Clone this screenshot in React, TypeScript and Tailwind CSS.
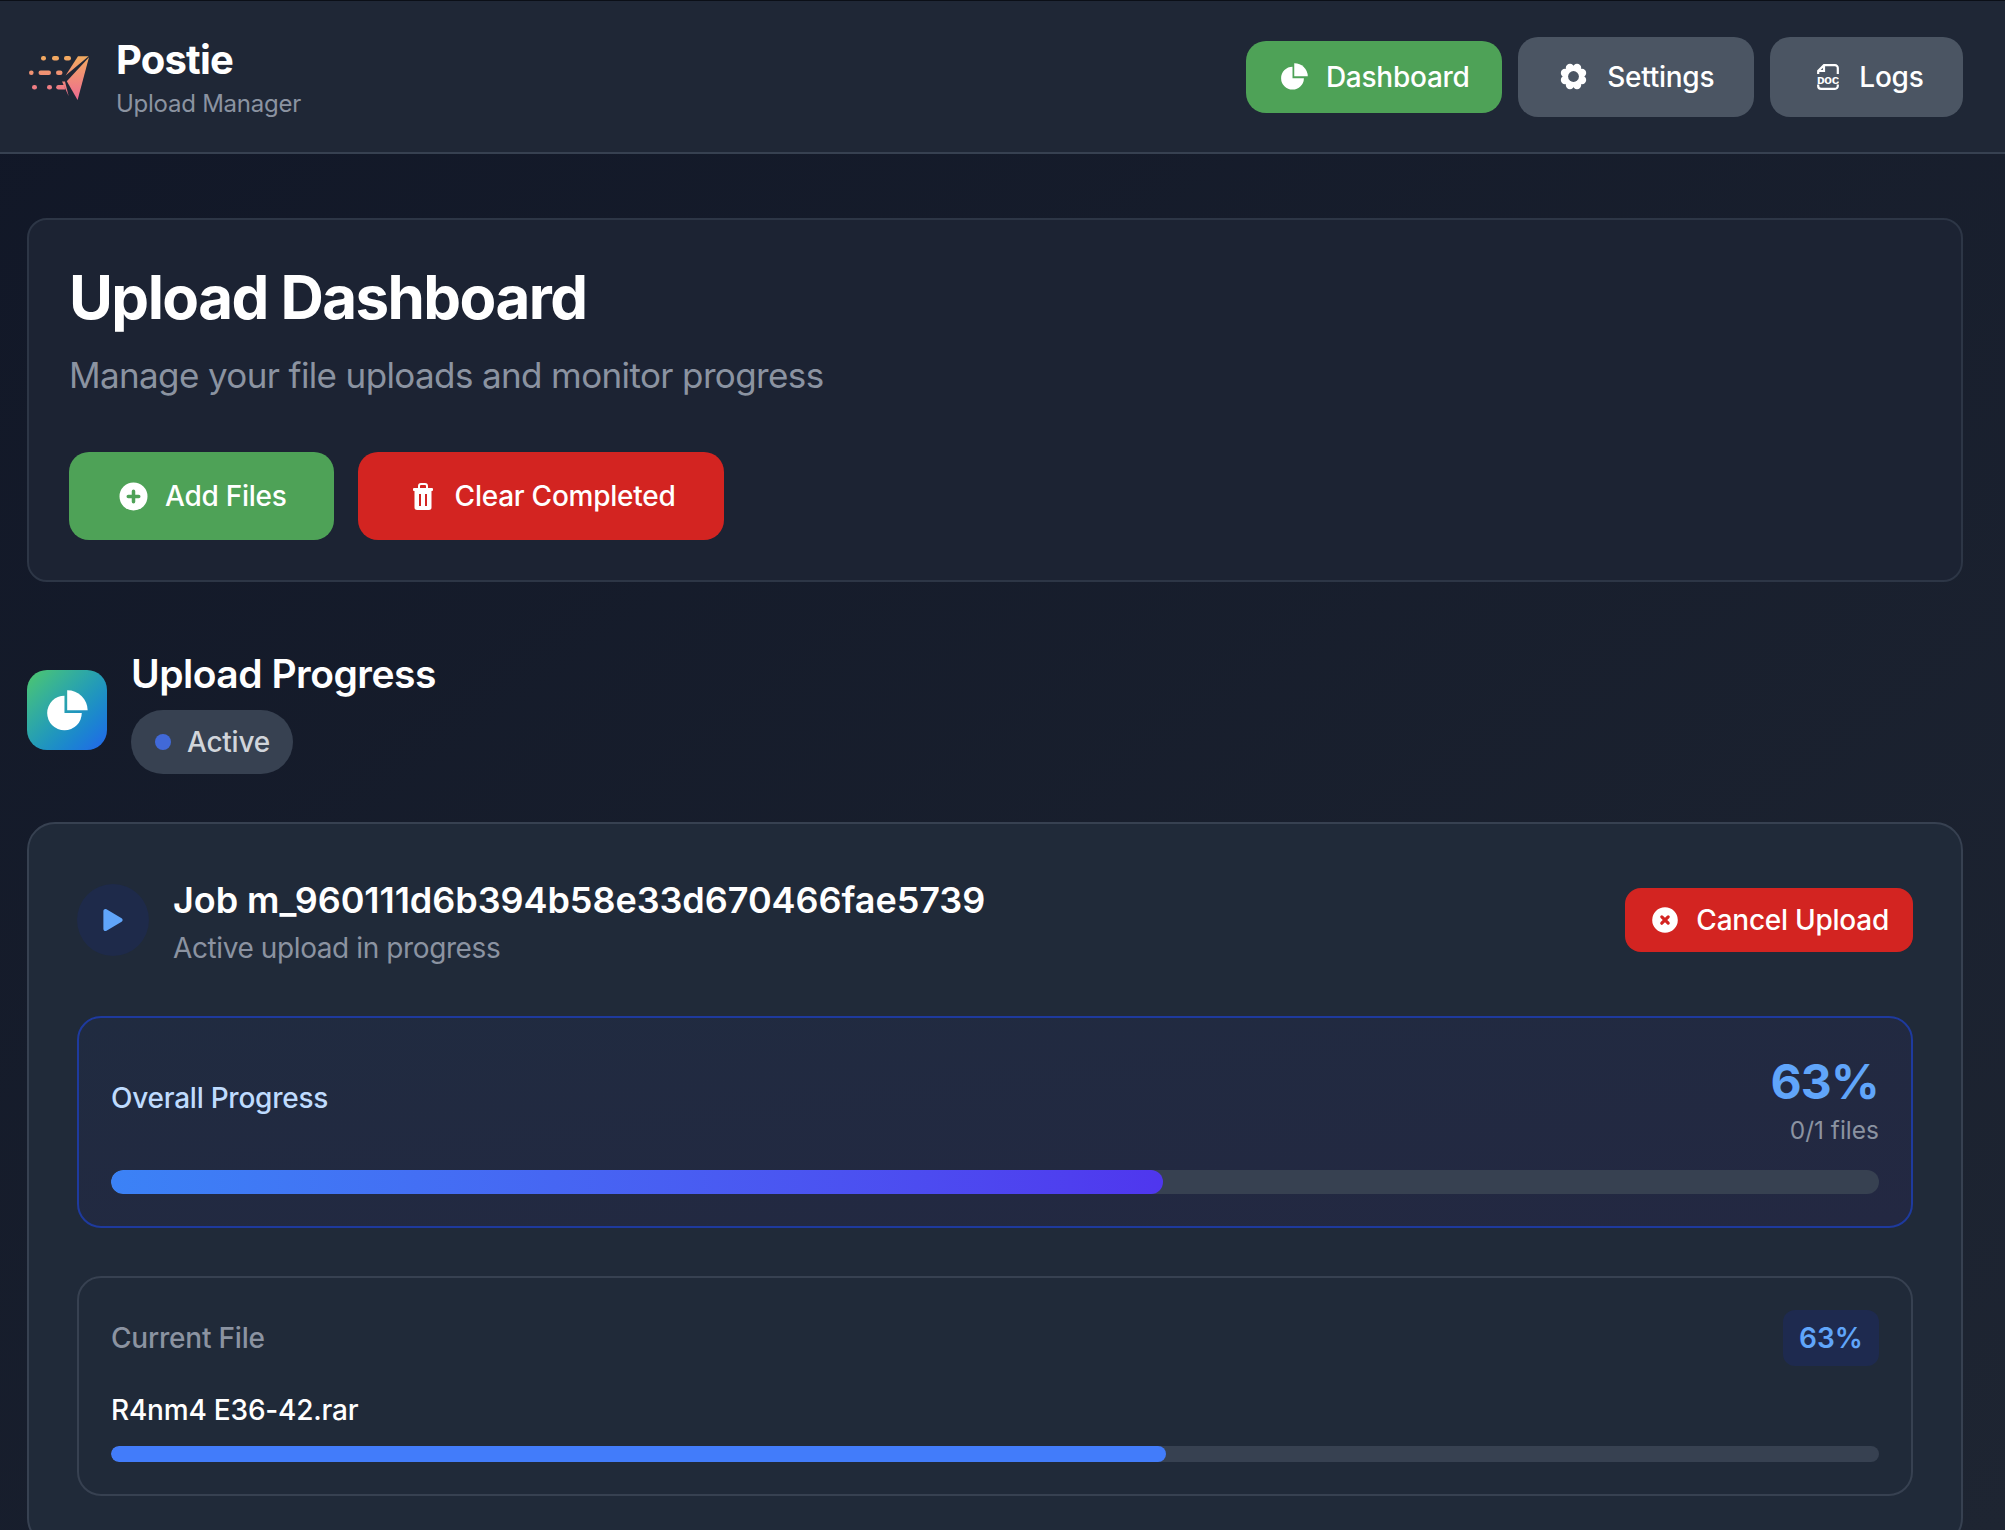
import { HiPlusCircle, HiXCircle } from 'react-icons/hi';
import { FaPlay } from 'react-icons/fa';

function Logo() {
  return (
    <svg width="62" height="52" viewBox="28 50 62 52" className="shrink-0">
      <defs>
        <linearGradient id="logoGrad" gradientUnits="userSpaceOnUse" x1="0" y1="55" x2="0" y2="99">
          <stop offset="0" stopColor="#f2ab5f" />
          <stop offset="1" stopColor="#ee6a92" />
        </linearGradient>
      </defs>
      <g fill="url(#logoGrad)">
        <rect x="41" y="55" width="5" height="4.4" rx="2.2" />
        <rect x="52" y="55" width="7" height="4.4" rx="2.2" />
        <rect x="64" y="55" width="7" height="4.4" rx="2.2" />
        <rect x="29" y="69.5" width="4.6" height="4.4" rx="2.2" />
        <rect x="38.5" y="69.5" width="12.5" height="4.4" rx="2.2" />
        <rect x="56" y="69.5" width="6.5" height="4.4" rx="2.2" />
        <rect x="32" y="84" width="5" height="4.6" rx="2.3" />
        <rect x="47" y="84" width="5" height="4.6" rx="2.3" />
        <path d="M58.5 84h6l.6 4.6h-6.6a2.3 2.3 0 0 1 0-4.6z" />
        <path d="M78 55.2L88.6 55.2L65.6 74.5z" />
        <path d="M89 56.2L77.6 99L66.8 80.3z" />
        <path d="M62 80.6L65 80.6L68.6 95z" />
      </g>
    </svg>
  );
}

function PieIcon({ size }: { size: number }) {
  return (
    <svg width={size} height={size} viewBox="0 0 122 122" fill="currentColor">
      <path d="M52 17A51.5 51.5 0 1 0 103.5 68.5H52z" />
      <path d="M60 1A60 60 0 0 1 121 60H60z" />
    </svg>
  );
}

function GearIcon() {
  const lobes = [0, 45, 90, 135, 180, 225, 270, 315];
  return (
    <svg width="27" height="27" viewBox="0 0 27 27" fill="currentColor">
      <mask id="gearHole">
        <rect width="27" height="27" fill="white" />
        <circle cx="13.5" cy="13.5" r="5.4" fill="black" />
      </mask>
      <g mask="url(#gearHole)">
        <circle cx="13.5" cy="13.5" r="10" />
        {lobes.map((a) => (
          <circle
            key={a}
            cx={13.5 + 9.2 * Math.cos((a * Math.PI) / 180 + Math.PI / 8)}
            cy={13.5 + 9.2 * Math.sin((a * Math.PI) / 180 + Math.PI / 8)}
            r="4.2"
          />
        ))}
      </g>
    </svg>
  );
}

function DocIcon() {
  return (
    <svg width="22" height="26" viewBox="0 0 22 26" className="ml-[5px]">
      <path
        d="M1.2 10V7L7 1.2H18A2.8 2.8 0 0 1 20.8 4V10M1.2 7H7V1.2M1.2 20.5V22A2.8 2.8 0 0 0 4 24.8H18A2.8 2.8 0 0 0 20.8 22V20.5"
        fill="none"
        stroke="currentColor"
        strokeWidth="2.2"
      />
      <text x="11" y="19.6" textAnchor="middle" fontSize="11" fontWeight="700" fill="currentColor" style={{ fontFamily: '"Liberation Mono", monospace' }} textLength="22" lengthAdjust="spacingAndGlyphs">
        DOC
      </text>
    </svg>
  );
}

function TrashIcon() {
  return (
    <svg width="20" height="27" viewBox="0 0 20 27" fill="currentColor">
      <path d="M6 5.5V3a2 2 0 0 1 2-2h4a2 2 0 0 1 2 2v2.5" fill="none" stroke="currentColor" strokeWidth="2" />
      <rect x="0" y="5" width="20" height="3" rx="1" />
      <path
        fillRule="evenodd"
        d="M1.5 8H18.5V24.5A2.5 2.5 0 0 1 16 27H4A2.5 2.5 0 0 1 1.5 24.5zM6 11V23H8V11zM12 11V23H14V11z"
      />
    </svg>
  );
}

function NavButton({ label, icon, active }: { label: string; icon: React.ReactNode; active?: boolean }) {
  return (
    <button
      className={`flex items-center rounded-[20px] text-[28px] font-medium tracking-[-0.25px] text-white ${
        active ? 'h-[72px] gap-[15.5px] bg-[#4ea257] px-[32px]' : 'h-[80px] gap-[18px] bg-[#4b5563] px-[39.5px]'
      }`}
    >
      <span className="flex w-[32px] justify-center">{icon}</span>
      {label}
    </button>
  );
}

function ProgressBar({ value, height, fill }: { value: number; height: string; fill: string }) {
  return (
    <div className={`w-full overflow-hidden rounded-full bg-[#374151] ${height}`}>
      <div className={`h-full rounded-full ${fill}`} style={{ width: `${value}%` }} />
    </div>
  );
}

export default function App() {
  return (
    <div
      className="h-[1530px] w-full overflow-hidden bg-gradient-to-br from-[#111727] to-[#1e2532] text-white"
      style={{ fontFamily: 'Inter, "Liberation Sans", sans-serif' }}
    >
      <header className="flex h-[154px] items-center justify-between border-t border-b-2 border-t-[#0b0f17] border-b-[#374151] bg-[#1f2736] pl-[28px] pr-[42px]">
        <div className="flex items-center gap-[26px]">
          <Logo />
          <div className="pt-[4px]">
            <div className="text-[40px] font-bold leading-[48px] tracking-[-0.8px]">Postie</div>
            <div className="mt-[2px] text-[24px] leading-[36px] tracking-[-0.25px] text-[#8b93a1]">Upload Manager</div>
          </div>
        </div>
        <nav className="flex items-center gap-[16px]">
          <NavButton active label="Dashboard" icon={<PieIcon size={27} />} />
          <NavButton label="Settings" icon={<GearIcon />} />
          <NavButton label="Logs" icon={<DocIcon />} />
        </nav>
      </header>

      <main className="pl-[27px] pr-[42px] pt-[64px]">
        <section className="rounded-[20px] border-2 border-[#2d3646] bg-[#1c2333] p-[40px]">
          <h1 className="mt-[1px] text-[60px] font-bold leading-[72px] tracking-[-1.55px]">Upload Dashboard</h1>
          <p className="mt-[14px] text-[35px] leading-[56px] tracking-[-0.62px] text-[#8b93a1]">Manage your file uploads and monitor progress</p>
          <div className="mt-[49px] flex gap-[24px] tracking-[-0.25px]">
            <button className="flex h-[88px] items-center gap-[14px] rounded-[20px] bg-[#4ea257] pl-[47px] pr-[47px] text-[28px] font-medium">
              <HiPlusCircle size={35} />
              Add Files
            </button>
            <button className="flex h-[88px] items-center gap-[22px] rounded-[20px] bg-[#d32421] pl-[55px] pr-[48px] text-[28px] font-medium">
              <TrashIcon />
              Clear Completed
            </button>
          </div>
        </section>

        <section className="mt-[64px] flex items-center gap-[24px]">
          <div className="flex h-[80px] w-[80px] items-center justify-center rounded-[20px] bg-gradient-to-br from-[#4fc768] to-[#2563eb]">
            <PieIcon size={41} />
          </div>
          <div>
            <h2 className="text-[39px] font-semibold leading-[56px] tracking-[-0.5px]">Upload Progress</h2>
            <div className="mt-[8px] flex h-[64px] w-[162px] items-center gap-[16px] rounded-full bg-[#374151] pl-[24px] text-[28px] font-medium tracking-[-0.25px] text-[#d1d5db]">
              <span className="h-[16px] w-[16px] rounded-full bg-[#4169d8]" />
              Active
            </div>
          </div>
        </section>

        <section className="mt-[48px] rounded-[28px] border-2 border-[#374151] bg-[#202a39] p-[48px]">
          <div className="flex items-center justify-between">
            <div className="flex items-center gap-[24px]">
              <div className="flex h-[72px] w-[72px] items-center justify-center rounded-full bg-[#1e2a4a] text-[#60a5fa]">
                <FaPlay size={22} />
              </div>
              <div className="h-[96px] pt-[4px]">
                <div className="text-[36px] font-semibold leading-[48px] tracking-[-0.05px]">Job m_960111d6b394b58e33d670466fae5739</div>
                <div className="text-[28px] leading-[48px] tracking-[-0.4px] text-[#8b93a1]">Active upload in progress</div>
              </div>
            </div>
            <button className="flex h-[64px] items-center gap-[15px] rounded-[16px] bg-[#d32421] pl-[24px] pr-[24px] text-[28px] font-medium tracking-[-0.25px]">
              <HiXCircle size={32} />
              Cancel Upload
            </button>
          </div>

          <div className="mt-[48px] rounded-[24px] border-2 border-[#1e3a9e] bg-gradient-to-br from-[#202b40] to-[#232842] p-[32px]">
            <div className="mb-[24px] flex items-center justify-between">
              <div className="text-[28px] font-medium tracking-[-0.25px] text-[#bfdbfe]">Overall Progress</div>
              <div className="text-right">
                <div className="text-[48px] font-bold leading-[64px] tracking-[-0.8px] text-[#60a5fa]">63%</div>
                <div className="text-[24.5px] leading-[32px] text-[#8b93a1]">0/1 files</div>
              </div>
            </div>
            <ProgressBar value={59.5} height="h-[24px]" fill="bg-gradient-to-r from-[#3b82f6] to-[#4f36ee]" />
          </div>

          <div className="mt-[48px] rounded-[24px] border-2 border-[#374151] p-[32px]">
            <div className="flex items-center justify-between">
              <div className="text-[28px] font-medium tracking-[-0.2px] text-[#8b93a1]">Current File</div>
              <div className="flex h-[56px] w-[96px] items-center justify-center rounded-[12px] bg-[#1e2a4f] text-[28px] font-semibold text-[#60a5fa]">63%</div>
            </div>
            <div className="mt-[16px] text-[28px] font-medium leading-[56px] tracking-[-0.2px]">R4nm4 E36-42.rar</div>
            <div className="mt-[8px]">
              <ProgressBar value={59.7} height="h-[16px]" fill="bg-[#427cfa]" />
            </div>
          </div>
        </section>
      </main>
    </div>
  );
}
